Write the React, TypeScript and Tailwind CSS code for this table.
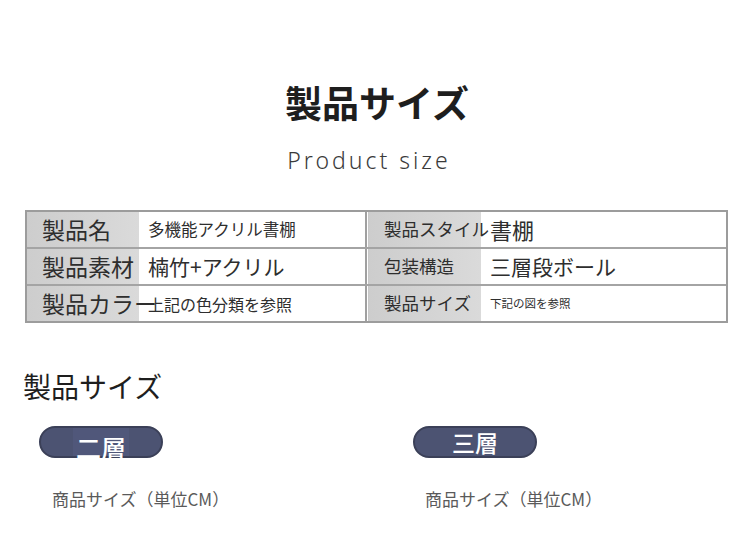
import React from "react";

const jp = { fontFamily: '"Noto Sans CJK JP", "Noto Sans", sans-serif' };

function Label({ children, size }: { children: React.ReactNode; size: string }) {
  return (
    <div
      className={`w-[112px] shrink-0 h-full flex items-center pl-[15px] whitespace-nowrap overflow-visible bg-gradient-to-r from-[#cdcdcd] to-[#dadada] text-[#2e2e2e] ${size}`}
    >
      <span className="relative z-0">{children}</span>
    </div>
  );
}

function Value({ children, size }: { children: React.ReactNode; size: string }) {
  return (
    <div className={`flex-1 h-full flex items-center pl-[9px] whitespace-nowrap text-[#2e2e2e] ${size}`}>
      <span className="relative z-10">{children}</span>
    </div>
  );
}

export default function App() {
  const rows: [string, string, string, string][] = [
    ["製品名", "多機能アクリル書棚", "製品スタイル", "書棚"],
    ["製品素材", "楠竹+アクリル", "包装構造", "三層段ボール"],
    ["製品カラー", "上記の色分類を参照", "製品サイズ", "下記の図を参照"],
  ];
  const leftLabelSize = "text-[23px]";
  const leftValueSizes = ["text-[16.5px]", "text-[21px]", "text-[16px]"];
  const rightLabelSize = "text-[17.5px]";
  const rightValueSizes = ["text-[22px]", "text-[21px]", "text-[11.5px]"];

  return (
    <div className="w-[750px] h-[558px] bg-white overflow-hidden flex flex-col" style={jp}>
      <div className="mt-[82px] text-center text-[37px] leading-[40px] font-bold text-[#1e1e1e] pl-[4px]">
        製品サイズ
      </div>
      <div
        className="mt-[23px] text-center text-[23px] leading-[30px] font-light tracking-[3px] text-[#3a3a3a] pr-[12px]"
        style={{ fontFamily: '"Noto Sans", "Open Sans", sans-serif' }}
      >
        Product size
      </div>

      <div className="mt-[35px] ml-[25px] w-[703px] border-2 border-[#9c9c9c] flex flex-col">
        {rows.map((r, i) => (
          <div
            key={i}
            className={`flex h-[35px] ${i < 2 ? "border-b-2 border-[#a4a4a4]" : ""} box-content`}
          >
            <div className="w-[340px] shrink-0 flex h-full border-r-2 border-[#a0a0a0]">
              <Label size={leftLabelSize}>{r[0]}</Label>
              <Value size={leftValueSizes[i]}>{r[1]}</Value>
            </div>
            <div className="flex-1 flex h-full border-l border-[#c8c8c8] ml-px">
              <Label size={rightLabelSize}>{r[2]}</Label>
              <Value size={rightValueSizes[i]}>{r[3]}</Value>
            </div>
          </div>
        ))}
      </div>

      <div className="mt-[47px] ml-[23px] text-[28px] leading-[32px] text-[#1e1e1e]">製品サイズ</div>

      <div className="mt-[24px] flex">
        <div className="w-[374px] pl-[39px]">
          <div className="w-[124px] h-[32px] rounded-full bg-[#4c5372] border-2 border-[#3b4058] flex items-center justify-center overflow-visible">
            <span className="bg-[#50577a] px-[3px] h-full flex items-center text-white text-[25px] font-medium leading-none pt-[10px]">
              二層
            </span>
          </div>
          <div className="mt-[31px] ml-[13px] text-[17px] leading-[20px] text-[#5a5a5a]">商品サイズ（単位CM）</div>
        </div>
        <div className="pl-[39px]">
          <div className="w-[124px] h-[32px] rounded-full bg-[#4c5372] border-2 border-[#3b4058] flex items-center justify-center text-white text-[23px] font-medium leading-none">
            三層
          </div>
          <div className="mt-[31px] ml-[12px] text-[17px] leading-[20px] text-[#5a5a5a]">商品サイズ（単位CM）</div>
        </div>
      </div>
    </div>
  );
}
